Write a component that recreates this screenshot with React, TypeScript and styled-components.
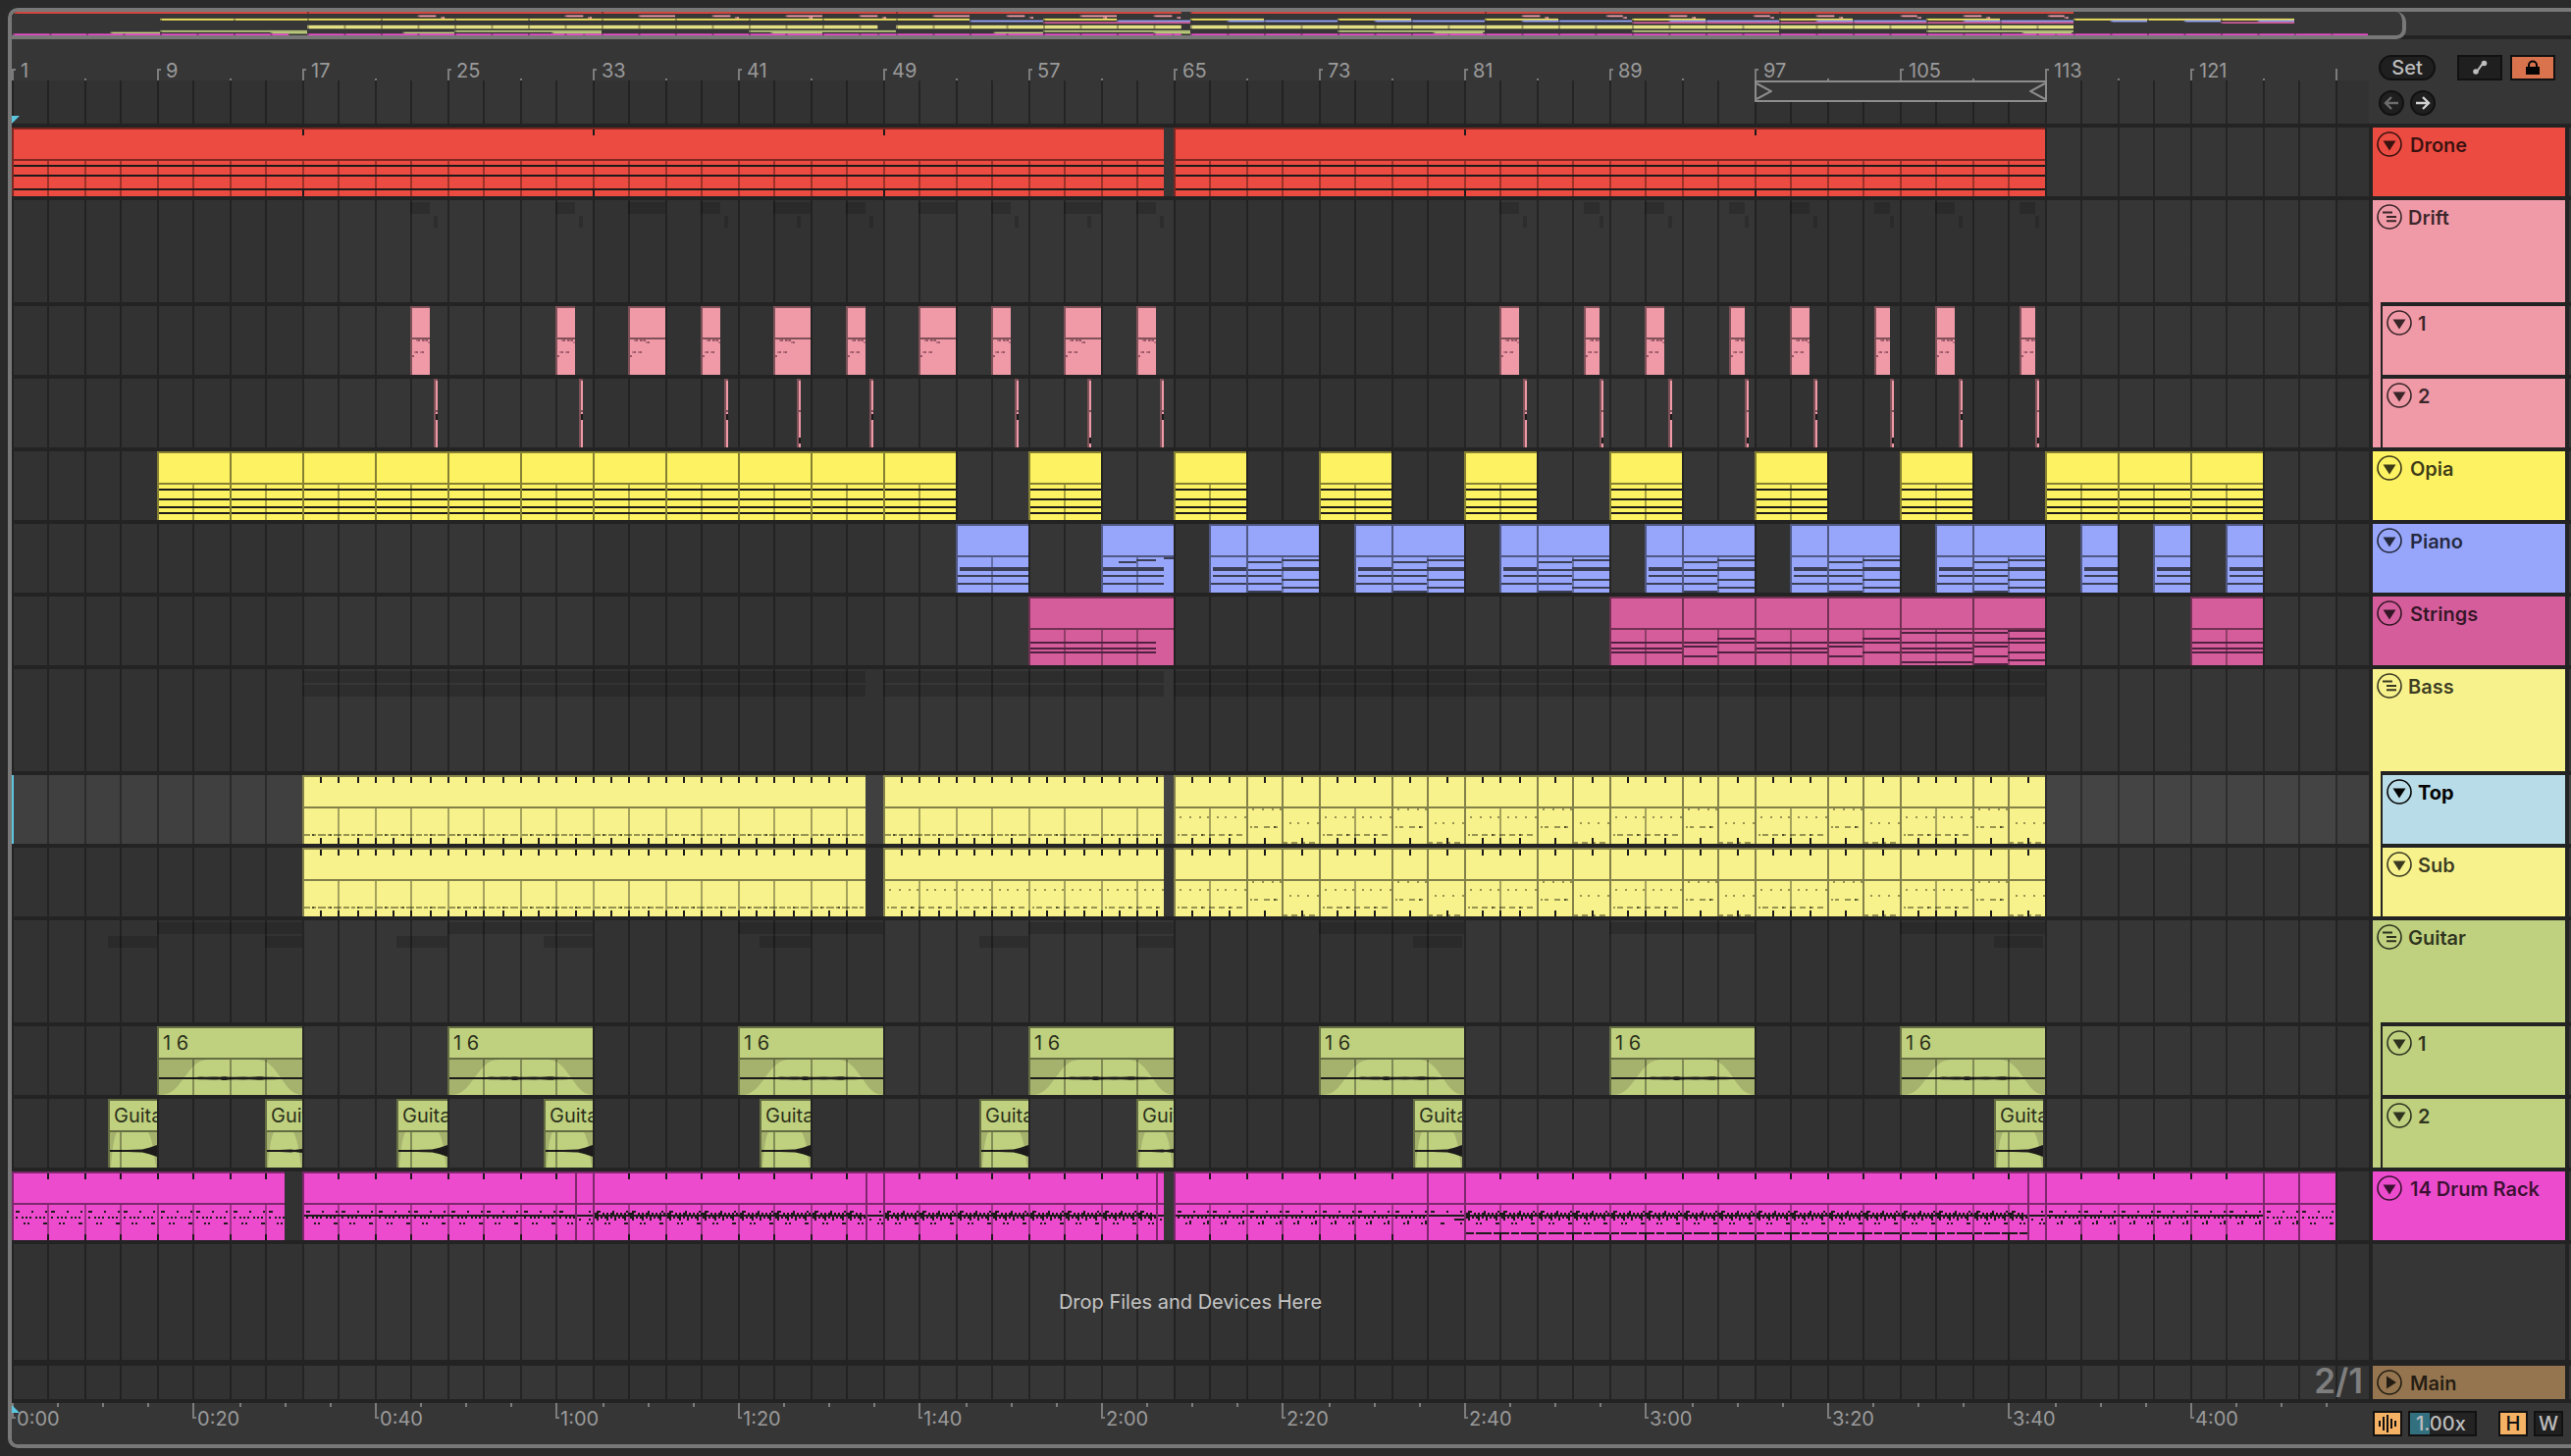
import React from "react";
import styled, { createGlobalStyle, css } from "styled-components";

/* ---------- palette and metrics ---------- */

const palette = {
  page: "#2a2a2a",
  frame: "#787878",
  gap: "#232323",
  panel: "#363636",
  label: "#9a9a9a",
  tick: "#7c7c7c",
  control: "#1f1f1f",
  outline: "#111111",
  controlText: "#bdbdbd",
  cyan: "#5cc5de",
  amber: "#f5b265",
  rust: "#d8734e",
  teal: "#33707f",
  red: "#ec4b41",
  pink: "#f09aa8",
  yellow: "#fdf261",
  blue: "#97a6fa",
  rose: "#d65d9c",
  cream: "#f7f28c",
  green: "#bfd07f",
  magenta: "#ed4bcd",
  brown: "#94754f",
  selected: "#b8dce8",
};

const BAR = 18.5;
const TRACK = 70;
const GROUP = 104;

const snap = (x: number) => Math.ceil(x / 2 - 0.5) * 2;
const barX = (bar: number) => snap((bar - 1) * BAR);

/* ---------- clip data ---------- */

type Rect = [x: number, y: number, w: number, h?: number];
type Strip = { tone: string; rects: Rect[] };

type ClipData = {
  from: number;
  to: number;
  notes?: Strip[];
  loop?: number;
  title?: string;
  audio?: "pad" | "swell";
};

type TrackData = {
  id: string;
  name: string;
  color: string;
  clips: ClipData[];
  selected?: boolean;
};

type GroupData = { id: string; name: string; color: string; children: TrackData[] };

const INK = "#1c1a1a";
const width = (c: { from: number; to: number }) => barX(c.to) - barX(c.from);
const lines = (ys: number[], x: number, w: number): Rect[] => ys.map((y) => [x, y, w]);
const held = (ys: number[], tone: string) => (from: number, to: number): ClipData => ({
  from,
  to,
  notes: [{ tone, rects: lines(ys, 2, width({ from, to }) - 2) }],
});
const series = (from: number, to: number, step: number) => {
  const out: number[] = [];
  for (let b = from; b < to; b += step) out.push(b);
  return out;
};

const droneClip = held([38, 48, 62], INK);
const drone: ClipData[] = [
  { ...droneClip(1, 64.5), loop: 16 },
  { ...droneClip(65, 113), loop: 16 },
];

const driftNotes: Strip[] = [
  {
    tone: "rgba(70,20,35,0.5)",
    rects: [[8, 34, 2], [12, 34, 2], [16, 34, 2], [20, 36, 2], [6, 46, 2], [12, 46, 2], [2, 50, 2]],
  },
  {
    tone: "rgba(70,20,35,0.3)",
    rects: [[6, 34, 2], [14, 34, 2], [18, 36, 2], [4, 46, 2], [10, 46, 2]],
  },
];
const driftSpans: [number, number][] = [
  [23, 24], [31, 32], [35, 37], [39, 40], [43, 45], [47, 48], [51, 53], [55, 56], [59, 61], [63, 64],
  [83, 84], [87.6, 88.5], [91, 92], [95.6, 96.5], [99, 100], [103.6, 104.5], [107, 108], [111.6, 112.5],
];
const drift1: ClipData[] = driftSpans.map(([from, to]) => ({ from, to, notes: driftNotes }));

const driftHits: [number, boolean][] = [
  [24.25, false], [32.25, false], [40.25, false], [44.25, true], [48.25, false], [56.25, false],
  [60.25, true], [64.25, false], [84.25, false], [88.5, true], [92.25, false], [96.5, true],
  [100.25, false], [104.5, true], [108.25, false], [112.5, true],
];
const drift2: ClipData[] = driftHits.map(([from, low]) => ({
  from,
  to: from + 0.22,
  notes: [{ tone: INK, rects: [[2, low ? 60 : 36, 2, 6]] }],
}));

const opiaClip = held([38, 48, 56, 62], INK);
const opia: ClipData[] = [...series(9, 53, 4), 57, 65, 73, 81, 89, 97, 105, ...series(113, 125, 4)].map((b) =>
  opiaClip(b, b + 4),
);

const PIANO_INK = "#3a3f56";
const pianoShort = (from: number): ClipData => ({
  from,
  to: from + 2,
  notes: [{ tone: PIANO_INK, rects: [[4, 44, 34, 4], [4, 52, 34], [2, 60, 36]] }],
});
const pianoLong = (from: number): ClipData => ({
  from,
  to: from + 4,
  notes: [
    {
      tone: PIANO_INK,
      rects: [...lines([38, 46, 52, 60, 68], 2, 34), ...lines([36, 56, 64], 36, 38), [36, 44, 38, 4]],
    },
  ],
});
const piano: ClipData[] = [
  { from: 53, to: 57, notes: [{ tone: PIANO_INK, rects: [[4, 44, 70, 4], [2, 52, 72], [2, 60, 72]] }] },
  {
    from: 61,
    to: 65,
    notes: [
      {
        tone: PIANO_INK,
        rects: [[2, 44, 62, 4], [2, 52, 62], [2, 60, 62], [18, 38, 18], [36, 36, 20], [64, 34, 10]],
      },
    ],
  },
  ...[67, 75, 83, 91, 99, 107].flatMap((b) => [pianoShort(b), pianoLong(b + 2)]),
  ...[115, 119, 123].map(pianoShort),
];

const ROSE_INK = "#4f2140";
const stringsPhrase = (from: number, first: number[], second: number[]): ClipData => ({
  from,
  to: from + 4,
  notes: [{ tone: ROSE_INK, rects: [...lines(first, 2, 34), ...lines(second, 36, 38)] }],
});
const triad = [46, 52, 56];
const strings: ClipData[] = [
  { from: 57, to: 65, notes: [{ tone: ROSE_INK, rects: lines(triad, 2, 128) }] },
  stringsPhrase(89, triad, triad),
  stringsPhrase(93, [46, 50, 60], [42, 46, 56]),
  stringsPhrase(97, triad, triad),
  stringsPhrase(101, [46, 50, 60], [42, 46, 56]),
  stringsPhrase(105, [36, ...triad, 66], [36, ...triad, 66]),
  stringsPhrase(109, [36, 46, 50, 60, 68], [34, 42, 46, 56, 64]),
  stringsPhrase(121, triad, triad),
];

const OLIVE = "rgba(20,20,0,0.42)";
const OLIVE_DARK = "rgba(10,10,0,0.5)";

/** Repeats a pattern that is `period` bars long until the clip ends. */
const tile = (from: number, to: number, period: number, pattern: Rect[]): Rect[] => {
  const limit = width({ from, to });
  return series(from, to, period).flatMap((b) => {
    const at = barX(b) - barX(from);
    return pattern
      .filter(([x, , w]) => at + x + w <= limit)
      .map(([x, y, w, h]): Rect => [at + x, y, w, h]);
  });
};

const bassRun = (from: number, to: number): ClipData => ({
  from,
  to,
  loop: 1,
  notes: [
    {
      tone: OLIVE,
      rects: tile(from, to, 4, [
        [2, 60, 6], [10, 60, 4], [16, 60, 8], [26, 60, 4], [32, 60, 8], [42, 60, 6], [50, 60, 4],
        [56, 60, 6], [64, 60, 8],
      ]),
    },
    { tone: OLIVE_DARK, rects: tile(from, to, 4, [[10, 60, 2], [28, 60, 2], [56, 60, 2]]) },
  ],
});
const bassDotted = (from: number, to: number): ClipData => ({
  from,
  to,
  loop: 1,
  notes: [
    {
      tone: OLIVE,
      rects: tile(from, to, 4, [
        [6, 42, 2], [16, 42, 2], [26, 42, 2], [34, 42, 2], [44, 42, 2], [52, 42, 2], [62, 42, 2],
        [72, 42, 2], [4, 60, 2], [8, 60, 6], [18, 60, 6], [28, 60, 4], [36, 60, 6], [46, 60, 6],
        [56, 60, 4], [64, 60, 6],
      ]),
    },
    { tone: OLIVE_DARK, rects: tile(from, to, 4, [[28, 60, 2], [56, 60, 2]]) },
  ],
});
const bassTurn = (from: number): ClipData[] => [
  {
    from,
    to: from + 2,
    loop: 1,
    notes: [
      {
        tone: OLIVE,
        rects: [[6, 34, 2], [16, 34, 2], [26, 34, 2], [34, 34, 2], [4, 52, 2], [8, 52, 4], [18, 52, 6], [28, 52, 4]],
      },
      { tone: OLIVE_DARK, rects: [[28, 52, 2]] },
    ],
  },
  {
    from: from + 2,
    to: from + 4,
    loop: 1,
    notes: [
      {
        tone: OLIVE,
        rects: [[8, 48, 2], [16, 48, 2], [26, 48, 2], [36, 48, 2], [2, 68, 4], [10, 68, 6], [20, 68, 4], [28, 68, 6]],
      },
    ],
  },
];
const bassVerse = series(65, 113, 8).flatMap((b) => [bassDotted(b, b + 4), ...bassTurn(b + 4)]);
const bassTop: ClipData[] = [bassRun(17, 48), bassRun(49, 64.5), ...bassVerse];
const bassSub: ClipData[] = [bassRun(17, 48), bassDotted(49, 64.5), ...bassVerse];

const guitar1: ClipData[] = [9, 25, 41, 57, 73, 89, 105].map((b) => ({
  from: b,
  to: b + 8,
  title: "1 6",
  audio: "pad",
}));
const guitarSpans: [number, number][] = [
  [6.3, 9], [15, 17], [22.2, 25], [30.3, 33], [42.2, 45], [54.3, 57], [63, 65], [78.2, 80.9], [110.2, 112.9],
];
const guitar2: ClipData[] = guitarSpans.map(([from, to]) => ({ from, to, title: "Guitar", audio: "swell" }));

const beat: Rect[] = [
  [4, 40, 4], [20, 40, 2], [34, 40, 2],
  [4, 46, 2], [10, 46, 2], [14, 46, 2], [18, 46, 2], [24, 46, 2], [28, 46, 2], [32, 46, 2],
  [12, 52, 2], [16, 52, 2], [32, 52, 4],
];
const beatAlt: Rect[] = [
  ...beat.slice(0, 10),
  [12, 52, 2], [16, 50, 2, 4], [30, 52, 2], [34, 50, 2, 4],
];
const busy: Rect[] = [
  [4, 40, 4], [20, 40, 2], [34, 40, 2],
  [2, 42, 4], [10, 42, 2], [14, 42, 2], [18, 42, 4], [24, 42, 2], [28, 42, 2], [32, 42, 2], [36, 42, 2],
  [2, 46, 2], [4, 46, 2, 4], [8, 46, 2], [12, 46, 2], [14, 46, 2, 4], [18, 46, 2], [22, 46, 2, 4],
  [26, 46, 2], [30, 46, 2], [32, 46, 2, 4],
  [12, 52, 2], [16, 52, 2], [32, 52, 4],
];
const drums = (from: number, to: number, pattern: Rect[], ride: boolean, loop?: number): ClipData => ({
  from,
  to,
  loop,
  notes: [
    {
      tone: INK,
      rects: [
        ...tile(from, to, 2, pattern),
        ...(ride ? [[2, 44, width({ from, to }) - 2] as Rect] : []),
      ],
    },
  ],
});
const fill = (from: number): ClipData => ({
  from,
  to: from + 1,
  notes: [{ tone: INK, rects: [[2, 44, 16], [14, 40, 2], [4, 48, 2], [14, 48, 2], [12, 52, 2], [16, 52, 2]] }],
});
const kick = drums(81, 112, busy, true, 2);
kick.notes!.push({
  tone: INK,
  rects: series(81, 112, 0.5).map((b): Rect => [barX(b) - barX(81) + 2, 62, 8]),
});
const drumRack: ClipData[] = [
  drums(1, 16, beat, false, 2),
  drums(17, 32, beat, true, 2),
  fill(32),
  drums(33, 48, busy, true, 2),
  fill(48),
  drums(49, 64, busy, true, 2),
  { from: 64, to: 64.5, notes: [{ tone: INK, rects: [[2, 44, 6], [4, 48, 2]] }] },
  drums(65, 79, beatAlt, true, 2),
  {
    from: 79,
    to: 81,
    notes: [{ tone: INK, rects: [[2, 44, 36], [4, 40, 4], [20, 40, 2], [34, 40, 2], [28, 48, 10], [14, 52, 4], [34, 52, 2]] }],
  },
  kick,
  fill(112),
  drums(113, 125, beatAlt, true, 2),
  drums(125, 127, beatAlt, false),
  drums(127, 129, beat, false),
];

const arrangement: (TrackData | GroupData)[] = [
  { id: "drone", name: "Drone", color: palette.red, clips: drone },
  {
    id: "drift",
    name: "Drift",
    color: palette.pink,
    children: [
      { id: "drift-1", name: "1", color: palette.pink, clips: drift1 },
      { id: "drift-2", name: "2", color: palette.pink, clips: drift2 },
    ],
  },
  { id: "opia", name: "Opia", color: palette.yellow, clips: opia },
  { id: "piano", name: "Piano", color: palette.blue, clips: piano },
  { id: "strings", name: "Strings", color: palette.rose, clips: strings },
  {
    id: "bass",
    name: "Bass",
    color: palette.cream,
    children: [
      { id: "bass-top", name: "Top", color: palette.cream, clips: bassTop, selected: true },
      { id: "bass-sub", name: "Sub", color: palette.cream, clips: bassSub },
    ],
  },
  {
    id: "guitar",
    name: "Guitar",
    color: palette.green,
    children: [
      { id: "guitar-1", name: "1", color: palette.green, clips: guitar1 },
      { id: "guitar-2", name: "2", color: palette.green, clips: guitar2 },
    ],
  },
  { id: "drums", name: "14 Drum Rack", color: palette.magenta, clips: drumRack },
];

const isGroup = (t: TrackData | GroupData): t is GroupData => "children" in t;

/* ---------- page shell ---------- */

const GlobalStyle = createGlobalStyle`
  *, *::before, *::after { box-sizing: border-box; }
  body {
    margin: 0;
    background: ${palette.page};
    font-family: Inter, "Liberation Sans", sans-serif;
    font-size: 20px;
    line-height: 24px;
  }
  button, input { font: inherit; }
`;

const Page = styled.main`
  display: flex;
  min-height: 100vh;
  padding: 8px 0 8px 8px;
`;

const Frame = styled.div`
  display: flex;
  flex-direction: column;
  flex: 1;
  min-width: 0;
  border: 4px solid ${palette.frame};
  border-right: 0;
  border-radius: 10px 0 0 10px;
  background: ${palette.gap};
  overflow: hidden;
`;

const OverviewBar = styled.div`
  display: flex;
  height: 28px;
  padding-right: 168px;
  background: linear-gradient(${palette.panel} 24px, ${palette.gap} 24px);
`;

const OverviewWindow = styled.div`
  flex: 1;
  min-width: 0;
  border: solid ${palette.frame};
  border-width: 0 4px 4px 0;
  border-radius: 0 10px 10px 0;
  background: ${palette.panel};
`;

const OverviewMap = styled.svg`
  display: block;
  width: 100%;
  height: 24px;
`;

const Band = styled.div`
  display: flex;
  flex: none;
  background: ${palette.panel};
`;

const BandMain = styled.div`
  flex: 1;
  min-width: 0;
`;

const BandSide = styled.div`
  flex: none;
  width: 206px;
`;

const Body = styled.div`
  display: flex;
  flex: 1;
  gap: 4px;
  padding: 4px 0;
`;

const Column = styled.div`
  display: flex;
  flex-direction: column;
`;

const LaneColumn = styled(Column)`
  flex: 1;
  min-width: 0;
  gap: 4px;
`;

const HeaderColumn = styled(Column)`
  flex: none;
  width: 196px;
  gap: 4px;
`;

const EdgeColumn = styled(Column)`
  flex: none;
  width: 2px;
  gap: 4px;
`;

/* ---------- rulers ---------- */

const gridPaper = css<{ $lit?: boolean }>`
  background-image: repeating-linear-gradient(
      90deg,
      rgba(0, 0, 0, 0.33) 0 2px,
      transparent 2px 36px,
      rgba(0, 0, 0, 0.33) 36px 38px,
      transparent 38px 74px
    ),
    repeating-linear-gradient(
      90deg,
      ${(p) => (p.$lit ? "#404040" : "#323232")} 0 296px,
      ${(p) => (p.$lit ? "#444444" : "#363636")} 296px 592px
    );
`;

const Ruler = styled.div`
  position: relative;
  height: 42px;
  overflow: hidden;
  color: ${palette.label};
`;

const RulerTicks = styled.svg`
  display: block;
  height: 42px;
  width: 100%;
  fill: ${palette.tick};
`;

const RulerLabel = styled.span<{ $top: number }>`
  position: absolute;
  top: ${(p) => p.$top}px;
`;

const Scrub = styled.div`
  position: relative;
  height: 44px;
  overflow: hidden;
  ${gridPaper}
`;

const Marker = styled.svg<{ $top: number }>`
  position: absolute;
  left: 0;
  top: ${(p) => p.$top}px;
  width: 8px;
  height: 8px;
  fill: ${palette.cyan};
`;

const LoopBrace = styled.div`
  position: absolute;
  top: 0;
  display: flex;
  justify-content: space-between;
  height: 22px;
  border: 2px solid #8c8c8c;
  background: ${palette.panel};

  svg {
    width: 16px;
    height: 18px;
    fill: none;
    stroke: #8c8c8c;
    stroke-width: 2;
  }
`;

function BeatRuler() {
  const bars = series(1, 130, 8);
  return (
    <Ruler>
      <RulerTicks shapeRendering="crispEdges" aria-hidden>
        {bars.map((b) => (
          <g key={b}>
            <rect x={barX(b)} y={30} width={2} height={12} />
            {b < 129 && <rect x={barX(b)} y={30} width={4} height={2} />}
            {b < 129 && <rect x={barX(b + 4)} y={40} width={2} height={2} />}
          </g>
        ))}
      </RulerTicks>
      {bars.filter((b) => b < 129).map((b) => (
        <RulerLabel key={b} $top={20} style={{ left: barX(b) + 9 }}>
          {b}
        </RulerLabel>
      ))}
    </Ruler>
  );
}

const SECOND = 9.25;

function TimeRuler() {
  const marks = series(0, 260, 5);
  return (
    <Ruler>
      <RulerTicks shapeRendering="crispEdges" aria-hidden>
        {marks.map((s) => {
          const x = snap(s * SECOND);
          return s % 20 === 0 ? (
            <g key={s}>
              <rect x={x} y={0} width={2} height={16} />
              <rect x={x} y={14} width={4} height={2} />
            </g>
          ) : (
            <rect key={s} x={x} y={0} width={2} height={4} />
          );
        })}
      </RulerTicks>
      <Marker $top={2} viewBox="0 0 8 8" aria-hidden>
        <path d="M0 0L8 8H0Z" />
      </Marker>
      {marks.filter((s) => s % 20 === 0).map((s) => (
        <RulerLabel key={s} $top={4} style={{ left: snap(s * SECOND) + 5 }}>
          {Math.floor(s / 60)}:{String(s % 60).padStart(2, "0")}
        </RulerLabel>
      ))}
    </Ruler>
  );
}

/* ---------- lanes and clips ---------- */

const Lane = styled.div<{ $height: number; $lit?: boolean }>`
  position: relative;
  flex: none;
  height: ${(p) => p.$height}px;
  overflow: hidden;
  ${gridPaper}
`;

const InsertMark = styled.div`
  position: absolute;
  inset: 0 auto 0 0;
  width: 2px;
  background: ${palette.cyan};
`;

const ClipBox = styled.div<{ $color: string }>`
  position: absolute;
  top: 0;
  bottom: 0;
  overflow: hidden;
  background: ${(p) => p.$color};
  box-shadow: inset 2px 2px 0 rgba(0, 0, 0, 0.47);
`;

const ClipTitle = styled.div`
  height: 34px;
  margin-left: 2px;
  padding: 5px 0 0 4px;
  border-bottom: 2px solid rgba(0, 0, 0, 0.47);
  color: rgba(0, 0, 0, 0.8);
  white-space: nowrap;
`;

const ClipArt = styled.svg`
  position: absolute;
  inset: 0;
  width: 100%;
  height: 100%;
`;

const padWave =
  "M2 52H40L44 51.6 50 51.8 56 51.6 60 51.6 64 51.8 67 51.2 70 51.2 73 51.8 80 51.8 88 51.6 94 51.8 100 51.6 103 51.2 107 51.2 110 51.8 118 51.7 124 52H148V54H124L118 54.2 110 54.2 107 54.8 103 54.8 100 54.4 94 54.2 88 54.4 80 54.2 73 54.4 70 54.9 67 54.9 64 54.2 60 54.4 56 54.4 50 54.2 44 54.2 40 54H2Z";

function AudioArt({ kind, w }: { kind: "pad" | "swell"; w: number }) {
  if (kind === "pad") {
    return (
      <>
        <path fill="rgba(0,0,0,0.14)" d="M2 34H52C30 34 26 70 4 70H2Z M102 34H148V70C128 70 124 34 102 34Z" />
        <path fill={INK} d={padWave} />
      </>
    );
  }
  const peak = w > 40 ? 6 : 2;
  return (
    <>
      <path
        fill="rgba(0,0,0,0.14)"
        d={`M2 34H9C5 42 4 58 3 70H2Z M${w - 9} 34H${w}V70H${w - 1}C${w - 3} 58 ${w - 4} 42 ${w - 9} 34Z`}
      />
      <path
        fill={INK}
        d={`M2 52H${w * 0.4}L${w * 0.7} 51.4 ${w - 8} ${53 - peak * 0.55} ${w} ${53 - peak}V${53 + peak}L${w - 8} ${53 + peak * 0.55} ${w * 0.7} 54.6 ${w * 0.4} 54H2Z`}
      />
    </>
  );
}

function Clip({ clip, color }: { clip: ClipData; color: string }) {
  const left = barX(clip.from);
  const w = width(clip);
  const gridBars = series(Math.floor(clip.from / 2) * 2 + 1, clip.to, 2).filter((b) => b > clip.from);
  const loopBars = clip.loop ? series(clip.from + clip.loop, clip.to, clip.loop) : [];
  return (
    <ClipBox $color={color} style={{ left, width: w }}>
      <ClipArt aria-hidden>
        {clip.audio && <AudioArt kind={clip.audio} w={w} />}
        <g shapeRendering="crispEdges">
          <g fill="rgba(0,0,0,0.33)">
            {gridBars.map((b) => (
              <rect key={b} x={barX(b) - left} y={34} width={2} height={36} />
            ))}
          </g>
          {clip.notes?.map((strip, i) => (
            <g key={i} fill={strip.tone}>
              {strip.rects.map(([x, y, rw, rh = 2], j) => (
                <rect key={j} x={x} y={y} width={rw} height={rh} />
              ))}
            </g>
          ))}
          <g fill={INK}>
            {loopBars.map((b) => (
              <React.Fragment key={b}>
                <rect x={barX(b) - left} y={2} width={2} height={6} />
                <rect x={barX(b) - left} y={64} width={2} height={6} />
              </React.Fragment>
            ))}
          </g>
        </g>
      </ClipArt>
      <ClipTitle>{clip.title}</ClipTitle>
    </ClipBox>
  );
}

function TrackLane({ track }: { track: TrackData }) {
  return (
    <Lane $height={TRACK} $lit={track.selected}>
      {track.selected && <InsertMark />}
      {track.clips.map((c) => (
        <Clip key={c.from} clip={c} color={track.color} />
      ))}
    </Lane>
  );
}

const GhostArt = styled.svg`
  display: block;
  width: 100%;
  height: 100%;
  fill: rgba(0, 0, 0, 0.15);
`;

function GroupLane({ group }: { group: GroupData }) {
  return (
    <Lane $height={GROUP}>
      <GhostArt shapeRendering="crispEdges" aria-hidden>
        {group.children.map((child, row) =>
          child.clips.map((c) => (
            <rect key={`${row}-${c.from}`} x={barX(c.from)} y={2 + row * 14} width={width(c)} height={12} />
          )),
        )}
      </GhostArt>
    </Lane>
  );
}

const DropLane = styled.div`
  display: flex;
  flex: 1;
  align-items: center;
  justify-content: center;
  min-height: 60px;
  margin-bottom: 2px;
  color: #c4c4c4;
  ${gridPaper}
`;

const MainLane = styled.div`
  display: flex;
  flex: none;
  align-items: center;
  justify-content: flex-end;
  height: 34px;
  padding: 0 6px 4px 0;
  color: #7e7e7e;
  font-size: 35px;
  font-weight: 600;
  ${gridPaper}
`;

/* ---------- track headers ---------- */

const Header = styled.div<{ $color: string; $height: number; $gap?: number; $strong?: boolean }>`
  display: flex;
  flex: none;
  align-items: flex-start;
  gap: ${(p) => p.$gap ?? 8}px;
  height: ${(p) => p.$height}px;
  padding: 4px;
  background: ${(p) => p.$color};
  color: ${(p) => (p.$strong ? "#050505" : "rgba(0, 0, 0, 0.76)")};
  font-weight: ${(p) => (p.$strong ? 700 : 600)};
  line-height: 28px;
  white-space: nowrap;
`;

const GroupBox = styled.div<{ $color: string }>`
  background: ${(p) => p.$color};
`;

const Nested = styled.div`
  margin-left: 8px;
  border-left: 2px solid ${palette.gap};

  > * {
    box-sizing: content-box;
    height: 62px;
    border-top: 4px solid ${palette.gap};
  }
`;

const FoldButton = styled.button`
  flex: none;
  width: 26px;
  height: 26px;
  padding: 0;
  border: 0;
  background: none;
  color: inherit;

  svg {
    display: block;
    width: 26px;
    height: 26px;
  }
`;

const glyphs = {
  open: <path d="M6.5 9.5H19.5L13 19.5Z" fill="currentColor" />,
  closed: <path d="M10 6.5V19.5L20 13Z" fill="currentColor" />,
  group: <path d="M6 8.6H16M10 13H20M10 17.2H20" stroke="currentColor" strokeWidth="2" />,
};

function Fold({ kind, label }: { kind: keyof typeof glyphs; label: string }) {
  return (
    <FoldButton type="button" aria-label={label}>
      <svg viewBox="0 0 26 26" fill="none" aria-hidden>
        <circle cx="13" cy="13" r="12" stroke="currentColor" strokeWidth="1.6" />
        {glyphs[kind]}
      </svg>
    </FoldButton>
  );
}

function TrackHeader({ track, nested }: { track: TrackData; nested?: boolean }) {
  return (
    <Header
      $color={track.selected ? palette.selected : track.color}
      $height={TRACK}
      $gap={nested ? 6 : 8}
      $strong={track.selected}
    >
      <Fold kind="open" label={`Fold ${track.name}`} />
      <span>{track.name}</span>
    </Header>
  );
}

function GroupHeader({ group }: { group: GroupData }) {
  return (
    <GroupBox $color={group.color}>
      <Header $color={group.color} $height={GROUP} $gap={6}>
        <Fold kind="group" label={`Fold ${group.name}`} />
        <span>{group.name}</span>
      </Header>
      <Nested>
        {group.children.map((c) => (
          <TrackHeader key={c.id} track={c} nested />
        ))}
      </Nested>
    </GroupBox>
  );
}

const HeaderSpace = styled.div`
  flex: 1;
  min-height: 60px;
  margin-bottom: 2px;
  background: ${palette.panel};
`;

const Edge = styled.div<{ $height: number; $lit?: boolean }>`
  flex: none;
  height: ${(p) => p.$height}px;
  background: ${(p) => (p.$lit ? "#444444" : palette.panel)};
`;

/* ---------- controls ---------- */

const Controls = styled(BandSide)`
  display: flex;
  flex-direction: column;
  gap: 10px;
  padding: 16px 16px 8px 10px;
`;

const ControlRow = styled.div<{ $gap: number }>`
  display: flex;
  gap: ${(p) => p.$gap}px;
`;

const ControlButton = styled.button<{ $width: number; $round?: boolean; $fill?: string; $ink?: string }>`
  display: flex;
  flex: none;
  align-items: center;
  justify-content: center;
  width: ${(p) => p.$width}px;
  height: 26px;
  padding: 0;
  border: 2px solid ${palette.outline};
  border-radius: ${(p) => (p.$round ? 13 : 0)}px;
  background: ${(p) => p.$fill ?? palette.control};
  color: ${(p) => p.$ink ?? palette.controlText};
  font-weight: 500;
  line-height: 22px;

  svg {
    display: block;
    width: 22px;
    height: 22px;
  }
`;

const Spacer = styled.div`
  flex: 1;
`;

const Footer = styled(BandSide)`
  display: flex;
  gap: 6px;
  padding: 8px 8px 8px 4px;
`;

const SpeedField = styled.input`
  width: 70px;
  height: 26px;
  padding: 0 0 0 6px;
  border: 2px solid ${palette.outline};
  border-radius: 0;
  background: linear-gradient(90deg, ${palette.teal} 20px, #232323 20px);
  color: ${palette.controlText};
  font-weight: 500;
`;

/* ---------- overview ---------- */

function Overview() {
  const rows = arrangement.flatMap((t) => (isGroup(t) ? [null, ...t.children] : [t]));
  const rowHeight = 24 / rows.length;
  const x = (bar: number) => 1 + (bar - 1) * 18.75;
  return (
    <OverviewMap viewBox="0 0 2436 24" preserveAspectRatio="none" role="img" aria-label="Arrangement overview">
      {rows.map((track, i) =>
        track?.clips.map((c) => {
          const left = x(c.from);
          const w = x(c.to) - left;
          const y = i * rowHeight;
          const step = c.loop === 1 ? 2 : c.loop;
          return (
            <g key={`${i}-${c.from}`}>
              <rect x={left} y={y} width={w} height={rowHeight} fill={track.color} opacity={0.6} />
              <rect x={left + 2} y={y + 0.3} width={Math.max(w - 2, 2)} height={rowHeight - 0.3} fill={track.color} />
              {step &&
                series(c.from + step, c.to, step).map((b) => (
                  <rect key={b} x={x(b)} y={y} width={2} height={rowHeight} fill="rgba(0,0,0,0.35)" />
                ))}
            </g>
          );
        }),
      )}
    </OverviewMap>
  );
}

/* ---------- app ---------- */

export default function App() {
  const flat = arrangement.flatMap((t) => (isGroup(t) ? [t, ...t.children] : [t]));
  return (
    <>
      <GlobalStyle />
      <Page>
        <Frame>
          <OverviewBar>
            <OverviewWindow>
              <Overview />
            </OverviewWindow>
          </OverviewBar>

          <Band>
            <BandMain>
              <BeatRuler />
              <Scrub>
                <LoopBrace style={{ left: barX(97), width: barX(113) - barX(97) + 2 }}>
                  <svg viewBox="0 0 16 18" aria-hidden>
                    <path d="M0 1L15 9L0 17" />
                  </svg>
                  <svg viewBox="0 0 16 18" aria-hidden>
                    <path d="M16 1L1 9L16 17" />
                  </svg>
                </LoopBrace>
                <Marker $top={36} viewBox="0 0 8 8" aria-hidden>
                  <path d="M0 0H8L0 8Z" />
                </Marker>
              </Scrub>
            </BandMain>
            <Controls>
              <ControlRow $gap={8}>
                <ControlButton type="button" $width={58} $round>
                  Set
                </ControlButton>
                <Spacer />
                <ControlButton type="button" $width={46} aria-label="Automation mode">
                  <svg viewBox="0 0 22 22" fill="none" aria-hidden>
                    <path d="M7 15.5C10 14.5 11.5 8 15 6.5" stroke="currentColor" strokeWidth="2" />
                    <circle cx="7" cy="15" r="2.8" fill="currentColor" />
                    <circle cx="15.5" cy="6.5" r="2.8" fill="currentColor" />
                  </svg>
                </ControlButton>
                <ControlButton type="button" $width={46} $fill={palette.rust} $ink="#050505" aria-label="Lock envelopes">
                  <svg viewBox="0 0 22 22" fill="none" aria-hidden>
                    <path d="M7 11V8.5A4 4 0 0 1 15 8.5V11" stroke="currentColor" strokeWidth="2" />
                    <rect x="4" y="10" width="14" height="8" fill="currentColor" />
                  </svg>
                </ControlButton>
              </ControlRow>
              <ControlRow $gap={6}>
                <ControlButton type="button" $width={26} $round $ink="#6c6c6c" aria-label="Previous locator">
                  <svg viewBox="0 0 22 22" fill="none" stroke="currentColor" strokeWidth="2.4" aria-hidden>
                    <path d="M18 11H5M11 5L5 11L11 17" />
                  </svg>
                </ControlButton>
                <ControlButton type="button" $width={26} $round $ink="#d0d0d0" aria-label="Next locator">
                  <svg viewBox="0 0 22 22" fill="none" stroke="currentColor" strokeWidth="2.4" aria-hidden>
                    <path d="M4 11H17M11 5L17 11L11 17" />
                  </svg>
                </ControlButton>
              </ControlRow>
            </Controls>
          </Band>

          <Body>
            <LaneColumn>
              {flat.map((t) =>
                isGroup(t) ? <GroupLane key={t.id} group={t} /> : <TrackLane key={t.id} track={t} />,
              )}
              <DropLane>Drop Files and Devices Here</DropLane>
              <MainLane>2/1</MainLane>
            </LaneColumn>
            <HeaderColumn>
              {arrangement.map((t) =>
                isGroup(t) ? <GroupHeader key={t.id} group={t} /> : <TrackHeader key={t.id} track={t} />,
              )}
              <HeaderSpace />
              <Header $color={palette.brown} $height={34}>
                <Fold kind="closed" label="Unfold Main" />
                <span>Main</span>
              </Header>
            </HeaderColumn>
            <EdgeColumn>
              {flat.map((t) => (
                <Edge key={t.id} $height={isGroup(t) ? GROUP : TRACK} $lit={!isGroup(t) && t.selected} />
              ))}
              <HeaderSpace />
              <Edge $height={34} />
            </EdgeColumn>
          </Body>

          <Band>
            <BandMain>
              <TimeRuler />
            </BandMain>
            <Footer>
              <ControlButton type="button" $width={30} $fill={palette.amber} $ink="#111" aria-label="Waveform zoom">
                <svg viewBox="0 0 22 22" stroke="currentColor" strokeWidth="2" aria-hidden>
                  <path d="M3 8V14M7 4V18M11 2V20M15 6V16M19 8V14" />
                </svg>
              </ControlButton>
              <SpeedField aria-label="Playback speed" defaultValue="1.00x" />
              <Spacer />
              <ControlButton type="button" $width={30} $fill={palette.amber} $ink="#111">
                H
              </ControlButton>
              <ControlButton type="button" $width={30}>W</ControlButton>
            </Footer>
          </Band>
        </Frame>
      </Page>
    </>
  );
}
